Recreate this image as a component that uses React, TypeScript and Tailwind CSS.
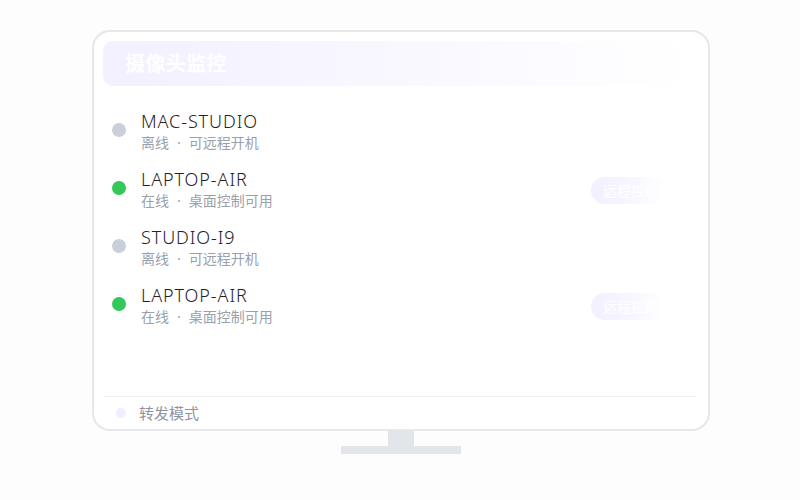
import React from "react";

const devices = [
  { name: "MAC-STUDIO", online: false, a: "离线", b: "可远程开机" },
  { name: "LAPTOP-AIR", online: true, a: "在线", b: "桌面控制可用" },
  { name: "STUDIO-I9", online: false, a: "离线", b: "可远程开机" },
  { name: "LAPTOP-AIR", online: true, a: "在线", b: "桌面控制可用" },
];

export default function App() {
  return (
    <div
      className="w-[800px] h-[500px] bg-[#fdfdfd] pt-[30px] overflow-hidden"
      style={{ fontFamily: '"Noto Sans", "Noto Sans CJK SC", sans-serif' }}
    >
      <div className="ml-[92px] w-[618px] flex flex-col items-center">
        <div className="relative w-[618px] h-[401px] rounded-[18px] border-2 border-[#e5e7eb] bg-white flex flex-col overflow-hidden">
          <div className="pt-[9px] pl-[9px] pr-[11px]">
            <div className="h-[45px] rounded-[10px] bg-gradient-to-r from-[#f3f0ff] via-[#faf9ff] via-60% to-white flex items-center pl-[22px]">
              <span className="text-white text-[20px] font-bold leading-none tracking-[0.4px]">摄像头监控</span>
            </div>
          </div>
          <div className="flex-1 flex flex-col gap-[14px] mt-[24px] pl-[18px] pr-[43px]">
            {devices.map((d, i) => (
              <div key={i} className="flex items-center">
                <div
                  className={
                    "w-[14px] h-[14px] rounded-full shrink-0 mt-[-4px] " +
                    (d.online ? "bg-[#34c759]" : "bg-[#cbd0d8]")
                  }
                />
                <div className="ml-[15px] flex-1 flex flex-col">
                  <span className="text-[18px] leading-[22px] font-light text-[#1f2328] tracking-[0.9px]">{d.name}</span>
                  <span className="text-[14px] leading-[22px] text-[#9aa1ab] flex items-center">
                    <span>{d.a}</span>
                    <span className="px-[8px]">·</span>
                    <span>{d.b}</span>
                  </span>
                </div>
                {d.online && (
                  <div className="h-[27px] w-[74px] pl-[12px] rounded-full bg-gradient-to-r from-[#f3f0ff] via-[#f7f5ff] to-white flex items-center text-white text-[14px] whitespace-nowrap overflow-hidden">
                    远程控制
                  </div>
                )}
              </div>
            ))}
          </div>
          <div className="ml-[10px] mr-[12px] border-t border-[#eef0f3] h-[33px] flex items-center pl-[12px]">
            <div className="w-[10px] h-[10px] rounded-full bg-[#f1eefe]" />
            <span className="ml-[13px] text-[15px] text-[#8e959f]">转发模式</span>
          </div>
        </div>
        <div className="w-[26px] h-[15px] bg-[#e2e6ea]" />
        <div className="w-[120px] h-[8px] bg-[#e2e6ea]" />
      </div>
    </div>
  );
}
